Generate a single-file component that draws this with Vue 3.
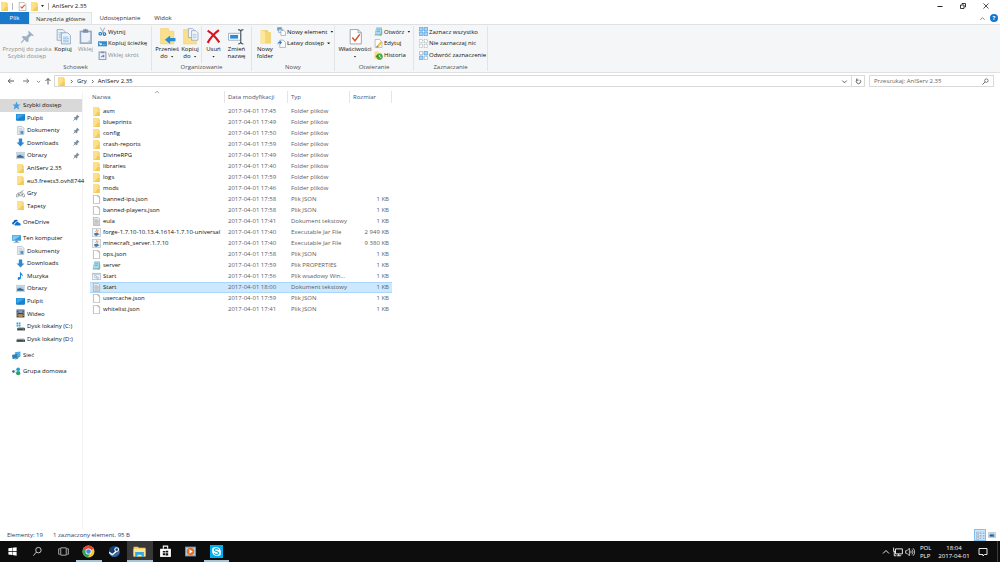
<script setup>
import { ref } from 'vue'

const tabs = ['Narzędzia główne', 'Udostępnianie', 'Widok']

const groups = [
  {
    label: 'Schowek', width: 152,
    big: [
      { icon: 'pin-big', lines: ['Przypnij do paska', 'Szybki dostęp'], width: 48, off: true },
      { icon: 'copy', lines: ['Kopiuj'], width: 24 },
      { icon: 'paste', lines: ['Wklej'], width: 21, off: true }
    ],
    small: [
      { icon: 'cut', text: 'Wytnij' },
      { icon: 'path', text: 'Kopiuj ścieżkę' },
      { icon: 'shortcut', text: 'Wklej skrót', off: true }
    ]
  },
  {
    label: 'Organizowanie', width: 100,
    big: [
      { icon: 'move-to', lines: ['Przenieś', 'do'], width: 24, menu: true },
      { icon: 'copy-to', lines: ['Kopiuj', 'do'], width: 23, menu: true, divider: true },
      { icon: 'delete', lines: ['Usuń', ''], width: 23, menu: true },
      { icon: 'rename', lines: ['Zmień', 'nazwę'], width: 23 }
    ],
    small: []
  },
  {
    label: 'Nowy', width: 83,
    big: [{ icon: 'folder-new', lines: ['Nowy', 'folder'], width: 20 }],
    small: [
      { icon: 'new-item', text: 'Nowy element', menu: true },
      { icon: 'easy', text: 'Łatwy dostęp', menu: true }
    ]
  },
  {
    label: 'Otwieranie', width: 79,
    big: [{ icon: 'props', lines: ['Właściwości', ''], width: 34, menu: true }],
    small: [
      { icon: 'notebook', text: 'Otwórz', menu: true },
      { icon: 'edit', text: 'Edytuj' },
      { icon: 'history', text: 'Historia' }
    ]
  },
  {
    label: 'Zaznaczanie', width: 74, big: [],
    small: [
      { icon: 'sel-all', text: 'Zaznacz wszystko' },
      { icon: 'sel-none', text: 'Nie zaznaczaj nic' },
      { icon: 'sel-inv', text: 'Odwróć zaznaczenie' }
    ]
  }
]

const tree = [
  [
    { icon: 'star', text: 'Szybki dostęp', root: true, current: true },
    { icon: 'desktop', text: 'Pulpit', pinned: true },
    { icon: 'docs', text: 'Dokumenty', pinned: true },
    { icon: 'down', text: 'Downloads', pinned: true },
    { icon: 'picture', text: 'Obrazy', pinned: true },
    { icon: 'folder', text: 'AnIServ 2.35' },
    { icon: 'folder', text: 'eu3.freets3.ovh8744' },
    { icon: 'games', text: 'Gry' },
    { icon: 'folder', text: 'Tapety' }
  ],
  [{ icon: 'cloud', text: 'OneDrive', root: true }],
  [
    { icon: 'pc', text: 'Ten komputer', root: true },
    { icon: 'docs', text: 'Dokumenty' },
    { icon: 'down', text: 'Downloads' },
    { icon: 'music', text: 'Muzyka' },
    { icon: 'picture', text: 'Obrazy' },
    { icon: 'desktop', text: 'Pulpit' },
    { icon: 'video', text: 'Wideo' },
    { icon: 'disk-win', text: 'Dysk lokalny (C:)' },
    { icon: 'disk', text: 'Dysk lokalny (D:)' }
  ],
  [{ icon: 'network', text: 'Sieć', root: true }],
  [{ icon: 'homegroup', text: 'Grupa domowa', root: true }]
]

const D = '2017-04-01 '
const files = [
  ['folder', 'asm', '17:45', 'Folder plików', ''],
  ['folder', 'blueprints', '17:49', 'Folder plików', ''],
  ['folder', 'config', '17:50', 'Folder plików', ''],
  ['folder', 'crash-reports', '17:59', 'Folder plików', ''],
  ['folder', 'DivineRPG', '17:49', 'Folder plików', ''],
  ['folder', 'libraries', '17:40', 'Folder plików', ''],
  ['folder', 'logs', '17:59', 'Folder plików', ''],
  ['folder', 'mods', '17:46', 'Folder plików', ''],
  ['file', 'banned-ips.json', '17:58', 'Plik JSON', '1 KB'],
  ['file', 'banned-players.json', '17:58', 'Plik JSON', '1 KB'],
  ['text', 'eula', '17:41', 'Dokument tekstowy', '1 KB'],
  ['jar', 'forge-1.7.10-10.13.4.1614-1.7.10-universal', '17:40', 'Executable Jar File', '2 949 KB'],
  ['jar', 'minecraft_server.1.7.10', '17:40', 'Executable Jar File', '9 380 KB'],
  ['file', 'ops.json', '17:58', 'Plik JSON', '1 KB'],
  ['notebook', 'server', '17:59', 'Plik PROPERTIES', '1 KB'],
  ['batch', 'Start', '17:56', 'Plik wsadowy Win...', '1 KB'],
  ['text', 'Start', '18:00', 'Dokument tekstowy', '1 KB'],
  ['file', 'usercache.json', '17:59', 'Plik JSON', '1 KB'],
  ['file', 'whitelist.json', '17:41', 'Plik JSON', '1 KB']
]
const selected = ref(16)
const query = ref('')

const system = [
  { icon: 'win', name: 'Start' },
  { icon: 'search-w', name: 'Wyszukaj' },
  { icon: 'taskview', name: 'Widok zadań' }
]
const apps = [
  { icon: 'chrome', name: 'Chrome', open: true },
  { icon: 'steam', name: 'Steam' },
  { icon: 'explorer', name: 'Eksplorator plików', open: true, active: true },
  { icon: 'store', name: 'Sklep' },
  { icon: 'media', name: 'Media' },
  { icon: 'skype', name: 'Skype', open: true }
]
</script>

<template>
  <div class="screen">
    <svg class="sprite" aria-hidden="true">
      <symbol id="folder" viewBox="0 0 16 16"><path d="M2 0h10v2h2v14H2z" fill="#f6d778" /><path d="M2 0h8v15H2z" fill="#fde08a" /><path d="M10 9h4v7H4z" fill="#f3cb5c" /></symbol>
      <symbol id="folder-new" viewBox="0 0 32 32"><path d="M7 4h14v4h5v21H7z" fill="#f0cd69" /><path d="M7 4l9 3v23l-9-2z" fill="#fde79b" /><path d="M16 8h8v20h-8z" fill="#f6d778" /></symbol>
      <symbol id="check-doc" viewBox="0 0 16 16"><path d="M2 1h9l3 3v11H2z" fill="#fff" stroke="#909090" /><path d="M4.500 8l2.500 3 5-6" fill="none" stroke="#e0532d" stroke-width="2" /></symbol>
      <symbol id="props" viewBox="0 0 32 32"><path d="M6 3h15l6 6v21H6z" fill="#fff" stroke="#8c9299" stroke-width="1.500" /><path d="M21 3v6h6" fill="none" stroke="#8c9299" stroke-width="1.500" /><path d="M10 18l5 6 9-12" fill="none" stroke="#e0532d" stroke-width="3" /></symbol>
      <symbol id="pin-big" viewBox="0 0 32 32"><path d="M18 5l10 9-3 1-2-1-5 5v6l-3 2-10-10 3-2 6 1 5-6-2-2z" fill="#9dafc2" /><path d="M11 20l-7 8" stroke="#9dafc2" stroke-width="2" /></symbol>
      <symbol id="pin" viewBox="0 0 16 16"><path d="M9 1l6 6-2 .500-3 3v2L8 15 1.500 8.500l1.500-1h2l3-3z" fill="#7b8d9e" /><path d="M5 11l-4 4" stroke="#7b8d9e" stroke-width="2" /></symbol>
      <symbol id="copy" viewBox="0 0 32 32"><g fill="#edf4fb" stroke="#7591ae" stroke-width="1.300"><path d="M4 3h11l4 4v16H4z" /><path d="M12 9h12l5 5v16H12z" /></g><path d="M15 17h10M15 20h11M15 23h11M15 26h11M7 9h8M7 12h4M7 15h4M7 18h4" stroke="#8db4dc" stroke-width="1.500" /></symbol>
      <symbol id="paste" viewBox="0 0 32 32"><path d="M5 5h23v25H5z" fill="#93a8c5" /><path d="M8 8h17v19H8z" fill="#eef2f8" /><path d="M11 3h3l2-2 2 2h3v6H11z" fill="#7d90ab" /><path d="M19 27h6v-6z" fill="#bccbdd" /></symbol>
      <symbol id="cut" viewBox="0 0 16 16"><path d="M4 1l6 10M12 1L7 11" stroke="#8ba0b3" stroke-width="1.500" /><g fill="none" stroke="#1979ca" stroke-width="2"><circle cx="4" cy="12" r="2.300" /><circle cx="11.500" cy="12.500" r="2.300" /></g></symbol>
      <symbol id="path" viewBox="0 0 16 16"><path d="M0 4h16v9H0z" fill="#348bc9" /><path d="M2 6l2 5 1-4 2 4M9 10h1M12 10h1" stroke="#fff" stroke-width="1.300" fill="none" /></symbol>
      <symbol id="shortcut" viewBox="0 0 16 16"><path d="M2 2h12v13H2z" fill="#eef2f8" stroke="#8da3c1" stroke-width="2" /><path d="M5 1h6v3H5z" fill="#8195b1" /><path d="M5 12c0-3 2-4 4-4V6l3 3-3 3v-2c-2 0-3 0-4 2z" fill="#5d7fae" /></symbol>
      <symbol id="move-to" viewBox="0 0 32 32"><path d="M3 1h15v5h10v24H3z" fill="#fbe08c" stroke="#efcb67" /><path d="M31 19v6H21v5l-10-8 10-8v5z" fill="#2b8dd6" /></symbol>
      <symbol id="copy-to" viewBox="0 0 32 32"><path d="M3 3h14v5h10v22H3z" fill="#fbe08c" stroke="#efcb67" /><g fill="#f0f5fb" stroke="#8199b6" stroke-width="1.200"><path d="M12 1h8l3 3v14H12z" /><path d="M18 5h8l4 4v14H18z" /></g><path d="M20 12h7M20 15h7M20 18h7" stroke="#82add8" /></symbol>
      <symbol id="delete" viewBox="0 0 32 32"><path d="M5 5c8 5 15 12 22 22M26 4C18 10 11 17 5 28" fill="none" stroke="#d81420" stroke-width="4" /></symbol>
      <symbol id="rename" viewBox="0 0 32 32"><path d="M1 10h23v13H1z" fill="#fff" stroke="#8fa1b3" stroke-width="1.500" /><path d="M4 13h15v7H4z" fill="#2e8ad5" /><path d="M19 3q5 0 5 4v19q0 4-5 4M29 3q-5 0-5 4v19q0 4 5 4" fill="none" stroke="#4c5763" stroke-width="2" /></symbol>
      <symbol id="new-item" viewBox="0 0 16 16"><path d="M1 1h7v5H1z" fill="#5ba5d9" stroke="#7c8d9c" /><path d="M3 4h7v6H3z" fill="#e3eef7" stroke="#7c8d9c" /><path d="M7 6h5l3 3v6H7z" fill="#fff" stroke="#7c8d9c" /></symbol>
      <symbol id="easy" viewBox="0 0 16 16"><path d="M5 2h6l4 4v9H5z" fill="#fff" stroke="#7c8d9c" /><path d="M1 10c0-4 2-5 4-5V2l4 4-4 4V7C3 7 2 8 1 10z" fill="#2b80c9" /></symbol>
      <symbol id="notebook" viewBox="0 0 16 16"><path d="M4 1h10l1 11-3 3H1z" fill="#72b9cb" /><path d="M4 2h9l-1 11H2z" fill="#a8dbe7" /><path d="M5 5h6M4.500 8h6" stroke="#5297ae" /><path d="M9 15l5-4v4z" fill="#a89b72" /></symbol>
      <symbol id="edit" viewBox="0 0 16 16"><path d="M2 1h8l4 4v10H2z" fill="#fff" stroke="#8d969e" /><path d="M5 12l7-8 3 2-7 8-4 1z" fill="#efc04a" /><path d="M4 15l1-3 3 2z" fill="#4578a8" /></symbol>
      <symbol id="history" viewBox="0 0 16 16"><path d="M1 1h6l2 2h4v11H1z" fill="#f9dc80" /><circle cx="10" cy="10" r="5.500" fill="#49a63f" /><path d="M10 7v3l3 2" fill="none" stroke="#fff" stroke-width="1.500" /><path d="M2 9l5-2-1 5z" fill="#218b40" /></symbol>
      <symbol id="sel-all" viewBox="0 0 16 16"><path d="M.500.500h6.500v6.500H.500zM9 .500h6.500v6.500H9zM.500 9h6.500v6.500H.500zM9 9h6.500v6.500H9z" fill="#a9d3f5" stroke="#318fdb" /></symbol>
      <symbol id="sel-none" viewBox="0 0 16 16"><path d="M1 1h5.500v5.500H1zM9.500 1H15v5.500H9.500zM1 9.500h5.500V15H1zM9.500 9.500H15V15H9.500z" fill="#fff" stroke="#8b9299" stroke-dasharray="2 1" /></symbol>
      <symbol id="sel-inv" viewBox="0 0 16 16"><path d="M1 1h5.500v5.500H1zM9.500 9.500H15V15H9.500z" fill="#fff" stroke="#7f9bb3" /><path d="M9 .500h6.500v6.500H9zM.500 9h6.500v6.500H.500z" fill="#a9d3f5" stroke="#318fdb" /></symbol>

      <symbol id="star" viewBox="0 0 16 16"><path d="M8 1l2 5 5 0-4 3.500L13 15l-5-3-5 3 1.500-5.500L1 6l5 0z" fill="#3fa0e2" /></symbol>
      <symbol id="desktop" viewBox="0 0 16 16"><path d="M0 2h16v11H0z" fill="#1284d4" /><path d="M1 3h14L2 11H1z" fill="#37a8ee" /><path d="M1 13h14v1H1z" fill="#0a639f" /></symbol>
      <symbol id="docs" viewBox="0 0 16 16"><path d="M3 1h8l3 3v11H3z" fill="#f5f8fa" stroke="#8f9ca7" /><path d="M5 5h6M5 7.500h7M5 10h3M5 12.500h3" stroke="#7fa5c4" /><path d="M8 9h5v5H8z" fill="#4393cd" /></symbol>
      <symbol id="down" viewBox="0 0 16 16"><path d="M5 1h6v7h4l-7 7-7-7h4z" fill="#2f87d0" /></symbol>
      <symbol id="picture" viewBox="0 0 16 16"><path d="M.500 2.500h15v11H.500z" fill="#fff" stroke="#98a5ae" /><path d="M2 4h12v8H2z" fill="#a4cdea" /><path d="M2 9l5-2 7 3v2H2z" fill="#38648a" /></symbol>
      <symbol id="games" viewBox="0 0 16 16"><path d="M1 14c-1-4 1-7 4-7h6c3 0 5 3 4 7-2 1-3-2-5-2H6c-2 0-3 3-5 2zM8 7c0-4 4-1 5-5" fill="#f5f5f5" stroke="#626b72" /><path d="M3 10h4M5 8v4" stroke="#626b72" /><circle cx="11" cy="10" r="1.300" fill="#626b72" /></symbol>
      <symbol id="cloud" viewBox="0 0 18 16"><path d="M2 12C-1 11 0 7 3 7c0-5 7-6 9-2l-2 1C7 5 6 8 6 9c-2 0-3 2-2 3z" fill="#0d5fb4" /><path d="M6 14c-2-1-1-4 1-4 0-4 6-4 7-1 3-1 5 4 2 5z" fill="#1471cb" /></symbol>
      <symbol id="pc" viewBox="0 0 16 16"><path d="M0 2h16v10H0z" fill="#3b9edb" /><path d="M1 3h14L3 11H1z" fill="#7fcaf1" /><path d="M6 12h4v2h3v1H3v-1h3z" fill="#6c7c88" /></symbol>
      <symbol id="music" viewBox="0 0 16 16"><path d="M7 1c1 3 6 4 5 9-1-2-2-3-3-3v5c0 4-6 4-6 1 0-2 2-3 4-2z" fill="#1a8ce0" /></symbol>
      <symbol id="video" viewBox="0 0 16 16"><path d="M1 1h14v14H1z" fill="#39424c" /><path d="M4 2h8v5H4z" fill="#7c9cc0" /><path d="M4 9h8v5H4z" fill="#b08d54" /><path d="M2.500 2v12M13.500 2v12" stroke="#e7ebef" stroke-dasharray="1.500 1.500" /></symbol>
      <symbol id="disk" viewBox="0 0 16 16"><path d="M3 8h11l2 3H1z" fill="#b8bec2" /><path d="M1 10h15v4H1z" fill="#3f474d" /><path d="M12 12h2" stroke="#6fe27c" /></symbol>
      <symbol id="disk-win" viewBox="0 0 16 16"><path d="M1 1h3v3H1zM5 1h3v3H5zM1 5h3v3H1zM5 5h3v3H5z" fill="#25a6dc" /><path d="M4 9h10l2 2H2z" fill="#b8bec2" /><path d="M2 11h14v4H2z" fill="#3f474d" /><path d="M12 13h2" stroke="#6fe27c" /></symbol>
      <symbol id="network" viewBox="0 0 16 16"><path d="M5 2l10-1v9l-8 1z" fill="#51acdf" /><path d="M0 7l9-2v8l-8 1z" fill="#2682bb" /><path d="M9 10l5-1-4 5-5 1z" fill="#578fa9" /></symbol>
      <symbol id="homegroup" viewBox="0 0 16 16"><path d="M3 8l9-5M3 8l9 4" stroke="#98aeb9" /><circle cx="2.500" cy="8" r="2.200" fill="#2d62a6" /><circle cx="11" cy="4" r="3.300" fill="#289fd6" /><circle cx="11" cy="11" r="3.800" fill="#27a35e" /></symbol>

      <symbol id="file" viewBox="0 0 16 16"><path d="M2.500.500h8l3 3v12h-11z" fill="#fff" stroke="#8f8f8f" /><path d="M10.500.500v3h3" fill="none" stroke="#8f8f8f" /></symbol>
      <symbol id="text" viewBox="0 0 16 16"><path d="M2.500.500h8l3 3v12h-11z" fill="#f4f4f4" stroke="#8f8f8f" /><path d="M4 4h6M4 6h8M4 8h8M4 10h8M4 12h8M4 14h8" stroke="#9b9b9b" /></symbol>
      <symbol id="jar" viewBox="0 0 16 16"><path d="M.500.500h15v15H.500z" fill="#f3f6f9" stroke="#93a2b0" /><path d="M8 8c-4-3 3-3 0-6M10 8c-2-2 2-2 1-4" fill="none" stroke="#dd7336" stroke-width="1.500" /><path d="M4 9h7v3q-1 2-3.500 2T4 12zM11 10h2v2h-2" fill="#4c7ba5" /></symbol>
      <symbol id="batch" viewBox="0 0 16 16"><path d="M.500 2.500h15v11H.500z" fill="#f4f7f9" stroke="#8b98a3" /><path d="M1 3h14v2H1z" fill="#bccad5" /><circle cx="6" cy="8" r="2" fill="none" stroke="#7f9cad" /><circle cx="10" cy="10.500" r="1.700" fill="none" stroke="#7f9cad" /></symbol>

      <symbol id="left" viewBox="0 0 16 16"><path d="M14 8H3M7 3.500L2.500 8 7 12.500" fill="none" stroke="#444" stroke-width="1.800" /></symbol>
      <symbol id="right" viewBox="0 0 16 16"><path d="M2 8h11M9 3.500L13.500 8 9 12.500" fill="none" stroke="#666" stroke-width="1.800" /></symbol>
      <symbol id="up" viewBox="0 0 16 16"><path d="M8 15V3M3 8l5-5 5 5" fill="none" stroke="#444" stroke-width="1.800" /></symbol>
      <symbol id="chev-down" viewBox="0 0 16 16"><path d="M3 6l5 5 5-5" fill="none" stroke="#555" stroke-width="2.200" /></symbol>
      <symbol id="chev-up" viewBox="0 0 16 16"><path d="M3 11l5-5 5 5" fill="none" stroke="#777" stroke-width="2" /></symbol>
      <symbol id="chev-right" viewBox="0 0 16 16"><path d="M6 3l5 5-5 5" fill="none" stroke="#444" stroke-width="2.500" /></symbol>
      <symbol id="refresh" viewBox="0 0 16 16"><path d="M11 4a5 5 0 1 1-6 0M4 1v4h4" fill="none" stroke="#444" stroke-width="1.800" /></symbol>
      <symbol id="search" viewBox="0 0 16 16"><circle cx="10" cy="6" r="4" fill="none" stroke="#555" stroke-width="1.600" /><path d="M7 9l-6 6" stroke="#555" stroke-width="2" /></symbol>
      <symbol id="min" viewBox="0 0 16 16"><path d="M3 9h10" stroke="#222" stroke-width="2" /></symbol>
      <symbol id="restore" viewBox="0 0 16 16"><path d="M3 6h7v7H3zM6 5V3h7v7h-2" fill="none" stroke="#222" stroke-width="1.800" /></symbol>
      <symbol id="close" viewBox="0 0 16 16"><path d="M3 3l10 10M13 3L3 13" stroke="#222" stroke-width="1.600" /></symbol>
      <symbol id="view-list" viewBox="0 0 16 16"><path d="M1 2h4v3H1zM1 7h4v3H1zM1 12h4v3H1z" fill="#fff" stroke="#7c8fa0" /><path d="M7 2h3M7 4.500h3M7 8h3M7 10.500h3M7 13.500h3M12 2h3M12 4.500h3M12 8h3M12 10.500h3M12 13.500h3" stroke="#7c8fa0" /></symbol>
      <symbol id="view-thumb" viewBox="0 0 16 16"><path d="M1 3h14v10H1z" fill="#fff" stroke="#8d9aa5" /><path d="M3 5h10v6H3z" fill="#4e9bd8" /><path d="M3 9l4-1 6 2v1H3z" fill="#2c4f6e" /></symbol>

      <symbol id="win" viewBox="0 0 24 24"><path d="M3 5l8-1v7H3zM12 4l9-1.500V11h-9zM3 12.500h8v7l-8-1zM12 12.500h9V21l-9-1.500z" fill="#fff" /></symbol>
      <symbol id="search-w" viewBox="0 0 24 24"><circle cx="14" cy="9" r="6" fill="none" stroke="#e8e8e8" stroke-width="1.800" /><path d="M10 13l-7 8" stroke="#e8e8e8" stroke-width="1.800" /></symbol>
      <symbol id="taskview" viewBox="0 0 24 24"><path d="M6 4h12v16H6zM4 6H1.500v12H4M20 6h2.500v12H20" fill="none" stroke="#ddd" stroke-width="1.600" /></symbol>
      <symbol id="chrome" viewBox="0 0 24 24"><circle cx="12" cy="12" r="11" fill="#f7cb35" /><path d="M12 12L2.500 6.500a11 11 0 0 1 19 0z" fill="#df4738" /><path d="M12 12L2.500 6.500A11 11 0 0 0 11 23l5-9z" fill="#35a354" /><circle cx="12" cy="12" r="5.500" fill="#fff" /><circle cx="12" cy="12" r="4.200" fill="#4285e6" /></symbol>
      <symbol id="steam" viewBox="0 0 24 24"><circle cx="12" cy="12" r="10.500" fill="#163f70" /><path d="M2 14l7 5 5-3 3-5 5 1-2 5-5 4-6 1-5-3z" fill="#356ba6" /><circle cx="16" cy="8.500" r="3.500" fill="#163f70" stroke="#fff" stroke-width="2" /><path d="M2 12l6 4 6-5 2 2-6 5q-2 2-4 0l-4-3z" fill="#fff" /></symbol>
      <symbol id="explorer" viewBox="0 0 24 24"><path d="M1 3h8l2 2h12v16H1z" fill="#f5cb57" /><path d="M1 7h22v14H1z" fill="#fde69a" /><path d="M4 13h16v9h-4v-4H8v4H4z" fill="#37a4e2" /></symbol>
      <symbol id="store" viewBox="0 0 24 24"><path d="M2 7h20v15H2z" fill="#fff" /><path d="M8 7V2h8v5" fill="none" stroke="#fff" stroke-width="2" /><path d="M7 11h4v3H7zM12 10.500h5V14h-5zM7 15h4v4H7zM12 15h5v4.500h-5z" fill="#111" /></symbol>
      <symbol id="media" viewBox="0 0 24 24"><path d="M2 3h20v18H2z" fill="#5fa5d2" /><path d="M4 5h16v14H4z" fill="#b5d9ee" /><circle cx="12" cy="12" r="7" fill="#ec6b21" /><path d="M10 8l6 4-6 4z" fill="#fff" /></symbol>
      <symbol id="skype" viewBox="0 0 24 24"><path d="M0 0h24v24H0z" fill="#00aff0" /><circle cx="12" cy="12" r="8" fill="#fff" /><circle cx="8" cy="8" r="4" fill="#fff" /><circle cx="16" cy="16" r="4" fill="#fff" /><path d="M16 9c-1-3-8-3-8 0 0 4 8 2 8 6 0 3-7 3-8 0" fill="none" stroke="#00aff0" stroke-width="2" /></symbol>
      <symbol id="tray-up" viewBox="0 0 16 16"><path d="M2 11l6-6 6 6" fill="none" stroke="#fff" stroke-width="1.800" /></symbol>
      <symbol id="tray-net" viewBox="0 0 16 16"><path d="M4 3h11v8H4zM9 11v3M6 14h7M1 1v6h3M2 7v7h3" fill="none" stroke="#fff" stroke-width="1.400" /></symbol>
      <symbol id="tray-vol" viewBox="0 0 16 16"><path d="M1 6h2l4-4v12l-4-4H1zM9 6q2 2 0 4M11 4q4 4 0 8M13 2q5 6 0 12" fill="none" stroke="#e4e4e4" stroke-width="1.300" /></symbol>
      <symbol id="tray-note" viewBox="0 0 20 20"><path d="M2 3h16v12h-5l-3 3v-3H2z" fill="none" stroke="#fff" stroke-width="1.800" /></symbol>
    </svg>

    <header class="titlebar">
      <svg class="ic9"><use href="#folder" /></svg>
      <span class="bar"></span>
      <button class="quick" aria-label="Właściwości"><svg class="ic9"><use href="#check-doc" /></svg></button>
      <button class="quick" aria-label="Nowy folder"><svg class="ic9"><use href="#folder" /></svg></button>
      <button class="caret-btn" aria-label="Dostosuj pasek"><i class="caret"></i></button>
      <span class="bar"></span>
      <h1>AnIServ 2.35</h1>
      <div class="controls">
        <button aria-label="Minimalizuj"><svg class="ic8"><use href="#min" /></svg></button>
        <button aria-label="Przywróć"><svg class="ic8"><use href="#restore" /></svg></button>
        <button aria-label="Zamknij"><svg class="ic8"><use href="#close" /></svg></button>
      </div>
    </header>

    <nav class="tabs">
      <button class="tab file-tab">Plik</button>
      <button v-for="(t, i) in tabs" :key="t" class="tab" :class="{ active: i === 0 }">{{ t }}</button>
      <div class="tab-tools">
        <button aria-label="Minimalizuj wstążkę"><svg class="ic7"><use href="#chev-up" /></svg></button>
        <button class="help" aria-label="Pomoc">?</button>
      </div>
    </nav>

    <section class="ribbon">
      <div v-for="g in groups" :key="g.label" class="group" :style="{ width: g.width + 'px' }">
        <div class="group-body">
          <button v-for="b in g.big" :key="b.icon" class="big" :class="{ off: b.off, divider: b.divider }" :style="{ width: b.width + 'px' }">
            <svg class="ic17"><use :href="'#' + b.icon" /></svg>
            <span v-for="(l, i) in b.lines" :key="i" class="line">{{ l }}<i v-if="b.menu && i === b.lines.length - 1" class="caret" :class="{ spaced: l }"></i></span>
          </button>
          <div v-if="g.small.length" class="small-col">
            <button v-for="s in g.small" :key="s.text" class="small" :class="{ off: s.off }">
              <svg class="ic9"><use :href="'#' + s.icon" /></svg>{{ s.text }}<i v-if="s.menu" class="caret spaced"></i>
            </button>
          </div>
        </div>
        <div class="group-label">{{ g.label }}</div>
      </div>
    </section>

    <section class="address">
      <div class="nav-btns">
        <button aria-label="Wstecz"><svg class="ic8"><use href="#left" /></svg></button>
        <button aria-label="Dalej"><svg class="ic8"><use href="#right" /></svg></button>
        <button class="slim" aria-label="Ostatnie lokalizacje"><svg class="ic5"><use href="#chev-down" /></svg></button>
        <button class="slim" aria-label="W górę"><svg class="ic8"><use href="#up" /></svg></button>
      </div>
      <div class="crumbs">
        <svg class="ic9"><use href="#folder" /></svg>
        <svg class="ic5"><use href="#chev-right" /></svg>
        <button>Gry</button>
        <svg class="ic5"><use href="#chev-right" /></svg>
        <button>AnIServ 2.35</button>
        <button class="drop" aria-label="Poprzednie lokalizacje"><svg class="ic7"><use href="#chev-down" /></svg></button>
        <button class="reload" aria-label="Odśwież"><svg class="ic7"><use href="#refresh" /></svg></button>
      </div>
      <label class="search">
        <input v-model="query" type="text" placeholder="Przeszukaj: AnIServ 2.35" aria-label="Przeszukaj: AnIServ 2.35" />
        <svg class="ic7"><use href="#search" /></svg>
      </label>
    </section>

    <main class="content">
      <aside class="tree">
        <ul v-for="(g, gi) in tree" :key="gi" :class="{ many: g.length > 1 }">
          <li v-for="n in g" :key="n.text">
            <a href="#" :class="{ root: n.root, current: n.current }">
              <svg class="ic9"><use :href="'#' + n.icon" /></svg>
              <span>{{ n.text }}</span>
              <svg v-if="n.pinned" class="ic7 pin"><use href="#pin" /></svg>
            </a>
          </li>
        </ul>
      </aside>
      <div class="list">
        <table>
          <colgroup><col class="c-name" /><col class="c-date" /><col class="c-type" /><col class="c-size" /></colgroup>
          <thead>
            <tr>
              <th class="sorted">Nazwa<svg class="ic6 sort"><use href="#chev-up" /></svg></th>
              <th>Data modyfikacji</th>
              <th>Typ</th>
              <th>Rozmiar</th>
            </tr>
          </thead>
          <tbody>
            <tr v-for="(f, i) in files" :key="i" :class="{ selected: i === selected }" @click="selected = i">
              <td><span class="fname"><svg class="ic9"><use :href="'#' + f[0]" /></svg>{{ f[1] }}</span></td>
              <td>{{ D + f[2] }}</td>
              <td>{{ f[3] }}</td>
              <td class="size">{{ f[4] }}</td>
            </tr>
          </tbody>
        </table>
      </div>
    </main>

    <footer class="status">
      <span class="count">Elementy: 19</span>
      <span>1 zaznaczony element. 95 B</span>
      <div class="views">
        <button class="on" aria-label="Szczegóły"><svg class="ic9"><use href="#view-list" /></svg></button>
        <button aria-label="Duże ikony"><svg class="ic8"><use href="#view-thumb" /></svg></button>
      </div>
    </footer>

    <div class="taskbar">
      <div class="sys">
        <button v-for="s in system" :key="s.icon" :aria-label="s.name"><svg class="ic11"><use :href="'#' + s.icon" /></svg></button>
      </div>
      <div class="apps">
        <button v-for="a in apps" :key="a.icon" :class="{ open: a.open, active: a.active }" :aria-label="a.name"><svg class="ic13"><use :href="'#' + a.icon" /></svg></button>
      </div>
      <div class="tray">
        <button aria-label="Ukryte ikony"><svg class="ic8"><use href="#tray-up" /></svg></button>
        <button aria-label="Sieć"><svg class="ic10"><use href="#tray-net" /></svg></button>
        <button aria-label="Głośność"><svg class="ic10"><use href="#tray-vol" /></svg></button>
        <button class="lang"><span>POL</span><span>PLP</span></button>
        <button class="clock"><span>18:04</span><span>2017-04-01</span></button>
        <button class="note" aria-label="Centrum akcji"><svg class="ic10"><use href="#tray-note" /></svg></button>
      </div>
    </div>
  </div>
</template>

<style>
body { margin: 0; }
</style>

<style scoped>
.screen {
  display: flex;
  flex-direction: column;
  min-height: 100vh;
  background: #fff;
  color: #111;
  font: 6px/8px "Open Sans", "Noto Sans", sans-serif;
  white-space: nowrap;
  cursor: default;
}
.screen *, .screen *::before { box-sizing: border-box; }
.sprite { position: absolute; width: 0; height: 0; }
button, input { font: inherit; color: inherit; background: none; border: 0; padding: 0; margin: 0; }
button { display: flex; align-items: center; justify-content: center; }
svg { display: block; flex: none; }
a { color: inherit; text-decoration: none; }
ul { list-style: none; margin: 0; padding: 0; }
.ic5 { width: 5px; height: 5px; }
.ic6 { width: 6px; height: 6px; }
.ic7 { width: 7px; height: 7px; }
.ic8 { width: 8px; height: 8px; }
.ic9 { width: 9px; height: 9px; }
.ic10 { width: 10px; height: 10px; }
.ic11 { width: 11px; height: 11px; }
.ic13 { width: 13px; height: 13px; }
.ic17 { width: 17px; height: 17px; }
.caret { display: inline-block; width: 3px; height: 2px; background: #222; clip-path: polygon(0 0, 100% 0, 50% 100%); }
.caret.spaced { margin-left: 3px; }

.titlebar { display: flex; align-items: center; height: 12px; }
.bar { width: 1px; height: 7px; margin: 0 3px; background: #b4b4b4; }
.quick { width: 12px; }
.caret-btn { width: 5px; }
h1 { margin: 0; font-size: 6px; font-weight: 400; }
.controls { display: flex; margin-left: auto; padding-right: 3px; }
.controls button { width: 23px; height: 11px; }

.tabs { display: flex; height: 12px; }
.tab { padding: 0 7px; color: #333; }
.file-tab { width: 29px; background: #1979ca; color: #fff; }
.tab.active { background: #f5f6f7; border: 1px solid #e1e3e5; border-bottom: 0; padding: 0 6px; }
.tab-tools { display: flex; align-items: center; gap: 4px; margin-left: auto; padding-right: 2px; }
.help { width: 8px; height: 8px; border-radius: 50%; background: #1177d1; color: #fff; font-weight: 700; }

.ribbon { display: flex; background: #f5f6f7; border: solid #dfe1e3; border-width: 1px 0; padding: 1px 0; }
.group { border-right: 1px solid #e2e4e6; }
.group-body { display: flex; height: 37px; padding-left: 3px; }
.group-label { text-align: center; color: #4f4f4f; line-height: 8px; }
.big { flex-direction: column; justify-content: flex-start; padding-top: 2px; }
.big svg { margin-bottom: 1px; }
.line { display: flex; align-items: center; justify-content: center; height: 7px; line-height: 7px; }
.divider { border-right: 1px solid #e2e4e6; }
.small-col { display: grid; grid-template-rows: repeat(3, 1fr); padding: 0 0 2px 2px; }
.small { justify-content: flex-start; }
.small svg { margin-right: 1px; }
.off { color: #8e8e8e; }

.address { display: flex; align-items: center; height: 16px; margin-bottom: 2px; padding-right: 6px; }
.nav-btns { display: flex; align-items: center; width: 54px; padding-left: 3px; }
.nav-btns button { width: 15px; height: 12px; }
.nav-btns .slim { width: 10px; }
.crumbs { display: flex; align-items: center; flex: 1; height: 12px; border: 1px solid #d9d9d9; padding-left: 2px; gap: 3px; }
.drop { margin-left: auto; }
.reload { width: 13px; height: 100%; border-left: 1px solid #d9d9d9; }
.search { display: flex; align-items: center; width: 125px; height: 12px; margin-left: 4px; border: 1px solid #d9d9d9; padding: 0 4px; }
.search input { flex: 1; min-width: 0; outline: 0; }
.search input::placeholder { color: #666; opacity: 1; }

.content { display: flex; flex: 1; }
.tree { width: 83px; padding-top: 8px; border-right: 1px solid #f3f3f3; }
.tree ul { display: grid; grid-template-columns: minmax(0, 1fr); grid-auto-rows: 1fr; height: 12px; margin-bottom: 4px; }
.tree ul.many { height: 113px; }
.tree li { display: grid; grid-template-columns: minmax(0, 1fr); }
.tree a { display: flex; align-items: center; gap: 2px; padding-left: 16px; }
.tree a.root { padding-left: 12px; }
.tree a.current { background: #d9d9d9; }
.pin { margin-left: auto; margin-right: 2px; }
.list { flex: 1; padding-left: 7px; }

table { border-collapse: separate; border-spacing: 0; table-layout: fixed; width: 302px; }
.c-name { width: 135px; }
.c-date { width: 63px; }
.c-type { width: 62px; }
.c-size { width: 42px; }
th { height: 12px; padding: 0 3px; font-weight: 400; text-align: left; color: #3f5575; border-right: 1px solid #e5e5e5; }
th.sorted { position: relative; padding-left: 2px; }
.sort { position: absolute; top: -2px; left: 64px; }
tbody::before { content: ""; display: block; height: 3px; }
td { height: 11px; padding: 0 3px; color: #5c5c5c; line-height: 9px; }
td:first-child { padding-left: 2px; color: #111; }
.fname { display: flex; align-items: center; gap: 2px; }
.size { text-align: right; }
.selected td { background: #cce8ff; box-shadow: inset 0 1px #a9d6fa, inset 0 -1px #a9d6fa; }

.status { display: flex; align-items: center; height: 12px; padding: 0 2px 0 7px; color: #27406a; }
.count { width: 46px; }
.views { display: flex; align-items: center; margin-left: auto; }
.views button { width: 12px; height: 12px; }
.views .on { background: #cce8ff; border: 1px solid #7fc0ee; }

.taskbar { display: flex; height: 21px; background: #0d0d0d; color: #fff; }
.sys { display: flex; width: 76px; }
.sys button { flex: 1; }
.apps { display: grid; grid-template-columns: repeat(6, 1fr); width: 153px; }
.apps button { border-top: 2px solid transparent; border-bottom: 2px solid transparent; }
.apps .open { border-bottom-color: #a8c4d8; background-clip: padding-box; }
.apps .active { background: #383838; border-top-color: #383838; }
.tray { display: flex; margin-left: auto; }
.tray button { width: 12px; }
.tray .lang, .tray .clock { flex-direction: column; width: 20px; }
.tray .lang { align-items: flex-start; padding-left: 4px; }
.tray .clock { width: 36px; }
.tray .note { width: 26px; margin-right: 2px; padding-right: 4px; border-right: 1px solid #3a3a3a; }
</style>
